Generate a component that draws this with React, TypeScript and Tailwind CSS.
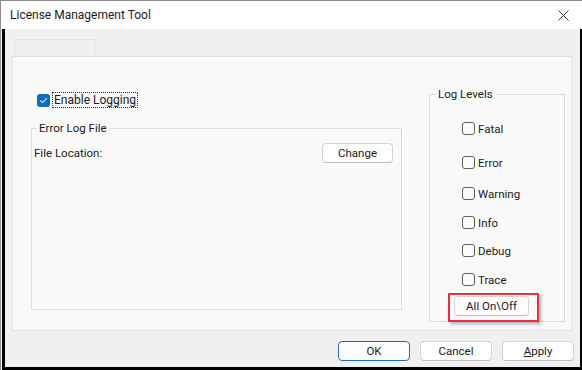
import type { ReactNode } from "react"

function CheckBox({ checked = false }: { checked?: boolean }) {
  if (checked) {
    return (
      <span className="flex w-[13px] h-[13px] shrink-0 items-center justify-center rounded-[3px] bg-[#0f6cbd]">
        <svg width="9" height="9" viewBox="0 0 9 9" fill="none">
          <path d="M1.5 4.7 L3.6 6.7 L7.6 2.3" stroke="#cfe2f5" strokeWidth="1.1" strokeLinecap="round" strokeLinejoin="round" />
        </svg>
      </span>
    )
  }
  return <span className="block w-[13px] h-[13px] shrink-0 rounded-[3px] border border-[#5f5f5f] bg-[#fbfbfb]" />
}

function Btn({ children, primary = false, className = "" }: { children: ReactNode; primary?: boolean; className?: string }) {
  return (
    <div
      className={`flex h-[20px] items-center justify-center rounded-[4px] bg-[#fdfdfd] text-[11.5px] text-[#1b1b1b] ${
        primary ? "border border-[#1f6fb8]" : "border border-[#d4d4d4] border-b-[#c0c0c0]"
      } ${className}`}
    >
      {children}
    </div>
  )
}

const levels = [
  { name: "Fatal", mt: "mt-[20px]" },
  { name: "Error", mt: "mt-[19px]" },
  { name: "Warning", mt: "mt-[16px]" },
  { name: "Info", mt: "mt-[14px]" },
  { name: "Debug", mt: "mt-[13px]" },
  { name: "Trace", mt: "mt-[14px]" },
]

export default function App() {
  return (
    <div className="w-[582px] h-[370px] overflow-hidden bg-white border-t border-l border-[#8c8c8c] font-['Roboto','Liberation_Sans',sans-serif] text-[11.5px] text-[#1b1b1b] leading-[14px]">
      {/* Title bar */}
      <div className="flex h-[28px] items-center justify-between pl-[9px] pr-[13px]">
        <span className="text-[12px]">License Management Tool</span>
        <svg width="11" height="11" viewBox="0 0 11 11">
          <path d="M0.5 0.5 L10.5 10.5 M10.5 0.5 L0.5 10.5" stroke="#333" strokeWidth="1" />
        </svg>
      </div>

      {/* Body */}
      <div className="ml-[1px] h-[341px] flex flex-col bg-[#f0f0f0] border-l-[3px] border-r-[2px] border-b-[3px] border-black">
        {/* Tab strip */}
        <div className="pt-[10px] pl-[9px]">
          <div className="w-[81px] h-[17px] bg-[#f0f0f0] border border-b-0 border-[#e2e2e2]" />
        </div>

        {/* Tab panel */}
        <div className="ml-[7px] w-[560px] h-[275px] flex border border-[#e2e2e2] bg-[#f9f9f9]">
          {/* Left column */}
          <div className="ml-[18px] w-[371px] flex flex-col">
            <div className="mt-[35px] ml-[6px] flex items-center gap-[2px]">
              <CheckBox checked />
              <span className="border border-dotted border-[#333] px-[1px] text-[12px]">Enable Logging</span>
            </div>
            <fieldset className="mt-[13px] h-[189px] border border-[#dcdcdc]">
              <legend className="ml-[5px] px-[2px]">Error Log File</legend>
              <div className="mt-[8px] flex items-center justify-between pl-[2px] pr-[8px]">
                <span>File Location:</span>
                <Btn className="w-[71px]">Change</Btn>
              </div>
            </fieldset>
          </div>

          {/* Right column */}
          <fieldset className="ml-[27px] mt-[30px] w-[136px] h-[235px] border border-[#dcdcdc]">
            <legend className="ml-[6px] px-[2px]">Log Levels</legend>
            <div className="flex flex-col pl-[32px]">
              {levels.map((l) => (
                <div key={l.name} className={`${l.mt} flex h-[15px] items-center gap-[3px]`}>
                  <CheckBox />
                  <span>{l.name}</span>
                </div>
              ))}
              <div className="-ml-[14px] mt-[6px] w-[91px] h-[29px] border-2 border-[#e8303a] pl-[4px] pt-[1px] shadow-[2px_2px_3px_rgba(0,0,0,0.3)]">
                <Btn className="w-[75px]">All On\Off</Btn>
              </div>
            </div>
          </fieldset>
        </div>

        {/* Dialog buttons */}
        <div className="mt-[10px] flex justify-end gap-[10px] pr-[6px]">
          <Btn primary className="w-[72px]">OK</Btn>
          <Btn className="w-[72px]">Cancel</Btn>
          <Btn className="w-[72px]">
            <span>
              <span className="underline">A</span>pply
            </span>
          </Btn>
        </div>
      </div>
    </div>
  )
}
